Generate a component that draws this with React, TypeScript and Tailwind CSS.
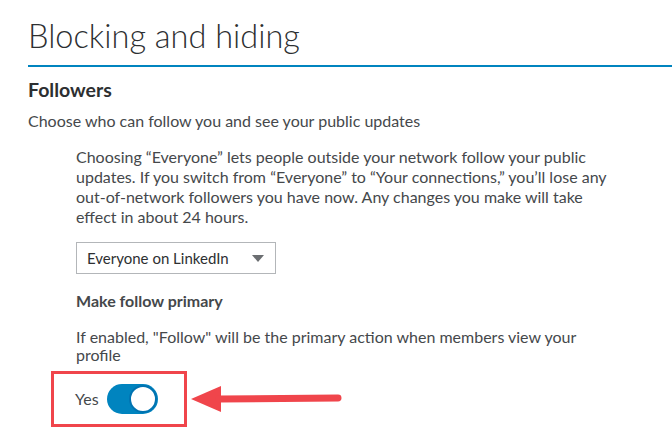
import { useState } from "react";

const Toggle = ({ on, onChange }: { on: boolean; onChange: () => void }) => (
  <button
    onClick={onChange}
    className={`relative h-[30px] w-[51px] rounded-full ${on ? "bg-[#0084bf]" : "bg-[#86888a]"}`}
  >
    <span
      className={`absolute top-[1px] h-[28px] w-[28px] rounded-full border-2 border-[#0073b1] bg-white ${on ? "right-[1px]" : "left-[1px]"}`}
    />
  </button>
);

const App = () => {
  const [primary, setPrimary] = useState(true);

  return (
    <div className="h-[434px] w-[672px] overflow-hidden bg-white pl-[28px] pt-[16px] font-['Lato',sans-serif] text-[#45484b]">
      <h1 className="text-[32.5px] font-light leading-[40px] text-[#2d2f31]">Blocking and hiding</h1>
      <div className="mt-[9px] h-[2px] bg-[#0084bf]" />

      <h2 className="mt-[10px] text-[19.5px] font-bold leading-[26px] text-[#2d2f31]">Followers</h2>
      <p className="mt-[8px] text-[16px] leading-[20px]">Choose who can follow you and see your public updates</p>

      <div className="ml-[48px] mt-[16px] w-[548px]">
        <p className="text-[16px] leading-[20px]">
          Choosing “Everyone” lets people outside your network follow your public updates. If you switch from
          “Everyone” to “Your connections,” you’ll lose any out-of-network followers you have now. Any changes you
          make will take effect in about 24 hours.
        </p>

        <div className="mt-[15px] flex h-[32px] w-[200px] items-center justify-between border border-[#b3b6b9] pl-[10px] pr-[11px] text-[15px] text-[#2d2f31]">
          <span>Everyone on LinkedIn</span>
          <svg width="12" height="7" viewBox="0 0 12 7">
            <path d="M0 0h12L6 7z" fill="#6b6e71" />
          </svg>
        </div>

        <h3 className="mt-[17px] text-[16px] font-bold leading-[20px]">Make follow primary</h3>
        <p className="mt-[17px] w-[530px] text-[16px] leading-[18px]">
          If enabled, "Follow" will be the primary action when members view your profile
        </p>
      </div>

      <div className="ml-[23px] mt-[7px] flex items-center gap-[20px]">
        <div className="flex h-[56px] w-[136px] items-center gap-[8px] border-[3px] border-[#f0454b] pl-[21px]">
          <span className="text-[16px]">Yes</span>
          <Toggle on={primary} onChange={() => setPrimary(!primary)} />
        </div>
        <svg width="152" height="28" viewBox="0 0 152 28" className="-ml-[16px]">
          <path d="M0 14 L30 1 L30 27 Z" fill="#f0454b" />
          <line x1="28" y1="14" x2="147" y2="13" stroke="#f0454b" strokeWidth="7" strokeLinecap="round" />
        </svg>
      </div>
    </div>
  );
};

export default App;
